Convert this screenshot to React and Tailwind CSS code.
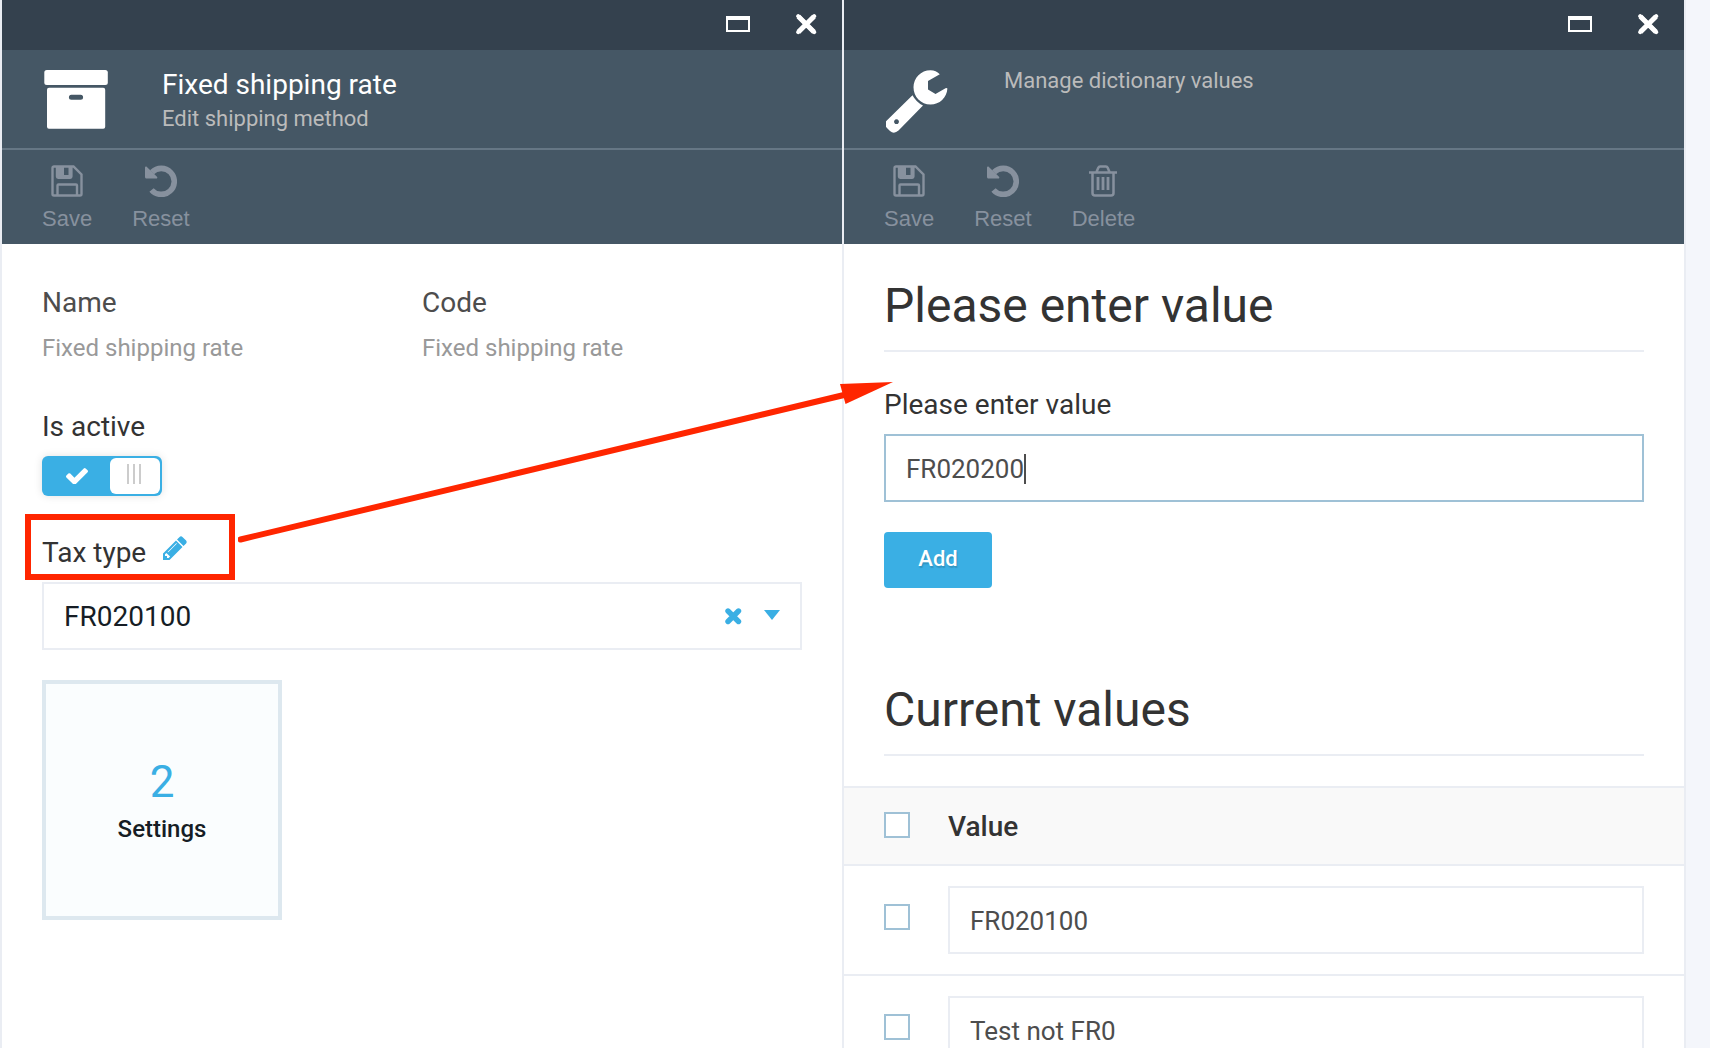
import React, { useState } from "react";

const toolbarIcons = {
  save: (
    <svg viewBox="0 0 32 32" className="size-8" aria-hidden="true">
      <path
        d="M3 1.500h19.500L30.500 9.500V29a1.500 1.500 0 0 1-1.500 1.500H3A1.500 1.500 0 0 1 1.500 29V3A1.500 1.500 0 0 1 3 1.500zM6 2v9.500a1.200 1.200 0 0 0 1.200 1.200h12a1.200 1.200 0 0 0 1.200-1.200V2M6.500 30V20.500a1 1 0 0 1 1-1h17.500a1 1 0 0 1 1 1V30"
        fill="none"
        stroke="currentColor"
        strokeWidth="2.400"
      />
      <path d="M6 2h7v10H6zM17.500 2h3v10h-3zM12 10h8v3h-8z" fill="currentColor" />
    </svg>
  ),
  reset: (
    <svg viewBox="0 0 32 32" className="size-8" aria-hidden="true">
      <path d="M7 7.300A13 13 0 1 1 6.500 25" fill="none" stroke="currentColor" strokeWidth="5.600" />
      <path d="M0 2.500C0 1.500 1.200 1.300 1.900 2L12 11.700C12.800 12.600 12.200 13.500 11.300 13.500H1.500C.6 13.500 0 12.900 0 12z" fill="currentColor" />
    </svg>
  ),
  delete: (
    <svg viewBox="0 0 32 32" className="size-8" aria-hidden="true">
      <path
        d="M2 7.500h28M5.500 8v20a2.500 2.500 0 0 0 2.500 2.500h16a2.500 2.500 0 0 0 2.500-2.500V8M9.500 7l1.800-4.300a2 2 0 0 1 1.800-1.200h5.800a2 2 0 0 1 1.800 1.200L22.500 7"
        fill="none"
        stroke="currentColor"
        strokeWidth="2.500"
      />
      <path d="M11 12v13M16 12v13M21 12v13" fill="none" stroke="currentColor" strokeWidth="2.800" />
    </svg>
  ),
};

const ArchiveIcon = () => (
  <svg viewBox="0 0 64 64" className="size-16" aria-hidden="true">
    <rect x="0.300" y="0" width="63.500" height="15" rx="2.500" fill="#fff" />
    <path
      fillRule="evenodd"
      fill="#fff"
      d="M5 17.700h54.200a2 2 0 0 1 2 2v37a2 2 0 0 1-2 2H5a2 2 0 0 1-2-2v-37a2 2 0 0 1 2-2zM27.400 24.800a2.500 2.500 0 0 0 0 5h9.200a2.500 2.500 0 0 0 0-5z"
    />
  </svg>
);

const WrenchIcon = () => (
  <svg viewBox="1 0 64 64" className="size-16" aria-hidden="true">
    <path
      fill="#fff"
      d="M54.800 4.300C52 1.300 49.500.2 45.500.2 36 .2 28.500 7.800 28.500 17.300S36 34.600 45.500 34.600C54.500 34.600 62 27.500 62.400 18.500Q61.800 17.700 60.500 18.300L50.500 24 43 19.500V11z"
    />
    <path
      fill="#fff"
      fillRule="evenodd"
      d="M27.500 25.200Q31 32 38 35.500L13.500 60.500Q9 64.500 5 61L1.500 57.500Q-1.500 53.500 1.800 50.500zM11.500 49.300a2.400 2.400 0 1 0 .01 0z"
    />
  </svg>
);

const CrossIcon = ({ className }) => (
  <svg viewBox="0 0 22 22" className={className} aria-hidden="true">
    <path
      d="M3.400 3.400L19 19M19 3.400L3.400 19"
      stroke="currentColor"
      strokeWidth="5"
      fill="none"
      strokeLinecap="butt"
    />
    <path d="M3.200 3.200L19.200 19.200M19.200 3.200L3.200 19.200" stroke="currentColor" strokeWidth="4" strokeLinecap="round" />
  </svg>
);

const ClearIcon = () => (
  <svg viewBox="0 0 18 18" className="size-[18px]" aria-hidden="true">
    <path d="M4 4L14.500 14.500M14.500 4L4 14.500" stroke="currentColor" strokeWidth="5.400" strokeLinecap="round" />
  </svg>
);

const PencilIcon = () => (
  <svg viewBox="128 128 1536 1536" className="size-6" fill="currentColor" aria-hidden="true">
    <path d="M491 1536l91-91-235-235-91 91v107h128v128h107zm523-928q0-22-22-22-10 0-17 7l-542 542q-7 7-7 17 0 22 22 22 10 0 17-7l542-542q7-7 7-17zm-54-192l416 416-832 832h-416v-416zm683 96q0 53-37 90l-166 166-416-416 166-165q36-38 90-38 53 0 91 38l235 234q37 39 37 91z" />
  </svg>
);

const CheckIcon = () => (
  <svg viewBox="121 334 1550 1188" className="w-[22px]" fill="#fff" aria-hidden="true">
    <path d="M1671 566q0 40-28 68l-724 724-136 136q-28 28-68 28t-68-28l-136-136-362-362q-28-28-28-68t28-68l136-136q28-28 68-28t68 28l294 295 656-657q28-28 68-28t68 28l136 136q28 28 28 68z" />
  </svg>
);

function Blade({ icon, title, subtitle, tools, children }) {
  return (
    <section className="flex min-w-0 flex-1 flex-col border-r-2 border-[#eaedf3] bg-white">
      <div className="flex h-[50px] shrink-0 items-center justify-end gap-[45px] bg-[#34414e] pr-[25px] pb-[2px] text-white">
        <button aria-label="Maximize" className="h-4 w-6 border-2 border-t-4 border-white" />
        <button aria-label="Close" className="size-[22px]">
          <CrossIcon className="size-[22px]" />
        </button>
      </div>
      <header className="flex h-[100px] shrink-0 border-b-2 border-[#667785] bg-[#455765] pl-10">
        <div className="w-[120px] pt-5">
          <div className="ml-[2px]">{icon}</div>
        </div>
        <div className="flex flex-col gap-[2px] pt-[17px]">
          {title && <h1 className="text-[28px] leading-9 text-white">{title}</h1>}
          <p className="text-[22px] leading-7 text-[#bbb]">{subtitle}</p>
        </div>
      </header>
      <div className="flex h-[94px] shrink-0 gap-10 bg-[#455765] px-10 pt-[15px] font-['Liberation_Sans',Arial,sans-serif] text-[22px] leading-7 text-[#87919e]">
        {tools.map((t) => (
          <button key={t} className="flex flex-col items-center gap-2 self-start">
            {toolbarIcons[t.toLowerCase()]}
            <span>{t}</span>
          </button>
        ))}
      </div>
      {children}
    </section>
  );
}

const Heading = ({ children }) => (
  <h2 className="border-b-2 border-[#eaedf3] pb-4 text-[48px] leading-[56px] text-[#333]">{children}</h2>
);

const Tick = ({ label }) => (
  <input
    type="checkbox"
    aria-label={label}
    className="block size-[26px] appearance-none border-2 border-[#9fc1d6] bg-white checked:bg-[#3aafe4]"
  />
);

export default function App() {
  const [value, setValue] = useState("FR020200");
  const [active, setActive] = useState(true);
  return (
    <main className="relative flex h-screen overflow-hidden border-l-2 border-[#eaedf3] bg-[#f4f6fb] pr-6 font-['Roboto',sans-serif]">
      <Blade icon={<ArchiveIcon />} title="Fixed shipping rate" subtitle="Edit shipping method" tools={["Save", "Reset"]}>
        <div className="px-10 pt-10">
          <dl className="grid grid-cols-2">
            {["Name", "Code"].map((n) => (
              <div key={n}>
                <dt className="text-[28px] leading-[38px] text-[#4d4d4d]">{n}</dt>
                <dd className="mt-[10px] text-[24px] leading-8 text-[#999]">Fixed shipping rate</dd>
              </div>
            ))}
          </dl>
          <label className="mt-11 block w-[120px] text-[28px] leading-[38px] text-[#333]">
            Is active
            <input type="checkbox" className="peer sr-only" checked={active} onChange={(e) => setActive(e.target.checked)} />
            <span className="mt-[10px] flex h-10 rounded-md bg-[#3aafe4] p-[2px] shadow-[0_0_8px_rgba(0,0,0,0.12)]">
              <span className="flex flex-1 items-center justify-center">
                <CheckIcon />
              </span>
              <span className="flex w-[50px] justify-center gap-1 rounded-md bg-white pt-[6px] pr-[2px]">
                <span className="h-5 w-[2px] bg-[#ccc]" />
                <span className="h-5 w-[2px] bg-[#ccc]" />
                <span className="h-5 w-[2px] bg-[#ccc]" />
              </span>
            </span>
          </label>
          <div className="relative mt-[38px] flex w-fit items-center text-[28px] leading-[38px] text-[#333]">
            <label htmlFor="tax">Tax type</label>
            <button aria-label="Edit tax types" className="ml-[17px] pb-[10px] text-[#3aafe4]">
              <PencilIcon />
            </button>
            <span className="pointer-events-none absolute -top-5 -left-[17px] h-[66px] w-[210px] border-6 border-[#ff2600]" />
          </div>
          <div className="relative mt-[10px]">
            <select
              id="tax"
              defaultValue="FR020100"
              className="block h-[68px] w-full appearance-none border-2 border-[#eaedf3] bg-white px-5 pt-[2px] text-[28px] leading-9 text-[#161d25]"
            >
              <option>FR020100</option>
              <option>Test not FR0</option>
            </select>
            <div className="pointer-events-none absolute inset-y-0 right-[22px] flex items-center gap-[22px] text-[#3aafe4]">
              <button aria-label="Clear" className="pointer-events-auto">
                <ClearIcon />
              </button>
              <svg viewBox="0 0 16 10" className="w-4 pb-[2px]" fill="currentColor" aria-hidden="true">
                <path d="M0 0h16L8 10z" />
              </svg>
            </div>
          </div>
          <button className="mt-[30px] flex size-60 flex-col items-center justify-center gap-[5px] border-4 border-[#dde8ef] bg-[#fafdfe]">
            <span className="text-[44px] leading-[52px] text-[#3aafe4]">2</span>
            <span className="text-[24px] leading-8 font-medium text-[#161d25]">Settings</span>
          </button>
        </div>
      </Blade>

      <Blade icon={<WrenchIcon />} subtitle="Manage dictionary values" tools={["Save", "Reset", "Delete"]}>
        <div className="px-10 pt-[34px]">
          <Heading>Please enter value</Heading>
          <label htmlFor="value" className="mt-[34px] block text-[28px] leading-[38px] text-[#333]">
            Please enter value
          </label>
          <div className="relative mt-[10px]">
            <input
              id="value"
              value={value}
              onChange={(e) => setValue(e.target.value)}
              className="block h-[68px] w-full border-2 border-[#9fc1d6] bg-white px-5 pt-[2px] text-[26px] text-[#4d4d4d] caret-transparent outline-none"
            />
            <span className="pointer-events-none absolute top-5 left-[140px] h-[30px] w-[2px] bg-[#4d4d4d]" />
          </div>
          <button className="mt-[30px] block h-14 w-[108px] rounded bg-[#3aafe4] pb-1 text-[22px] font-medium text-white [text-shadow:1px_2px_1px_rgba(0,0,0,0.15)]">
            Add
          </button>
          <div className="mt-[94px]">
            <Heading>Current values</Heading>
          </div>
        </div>
        <table className="mt-[30px] w-full table-fixed border-separate border-spacing-0 border-t-2 border-[#eaedf3] text-left">
          <thead>
            <tr className="h-[78px] bg-[#f9f9f9]">
              <th className="w-[104px] border-b-2 border-[#eaedf3] pb-[2px] pl-10">
                <Tick label="Select all" />
              </th>
              <th className="border-b-2 border-[#eaedf3] pt-[2px] text-[28px] leading-9 font-medium text-[#333]">Value</th>
            </tr>
          </thead>
          <tbody>
            {["FR020100", "Test not FR0"].map((v) => (
              <tr key={v}>
                <td className="border-b-2 border-[#eaedf3] pb-[6px] pl-10">
                  <Tick label={"Select " + v} />
                </td>
                <td className="border-b-2 border-[#eaedf3] py-5 pr-10">
                  <input
                    aria-label="Value"
                    defaultValue={v}
                    className="block h-[68px] w-full border-2 border-[#eaedf3] bg-white px-5 pt-[2px] text-[26px] text-[#4d4d4d]"
                  />
                </td>
              </tr>
            ))}
          </tbody>
        </table>
      </Blade>

      <svg
        viewBox="0 0 660 170"
        className="pointer-events-none absolute top-[378px] left-[236px] w-[660px]"
        aria-hidden="true"
      >
        <path d="M2.500 161.500L606 17" stroke="#ff2600" strokeWidth="6" strokeLinecap="round" />
        <path d="M655 4L602 6 607.500 26z" fill="#ff2600" />
      </svg>
    </main>
  );
}
